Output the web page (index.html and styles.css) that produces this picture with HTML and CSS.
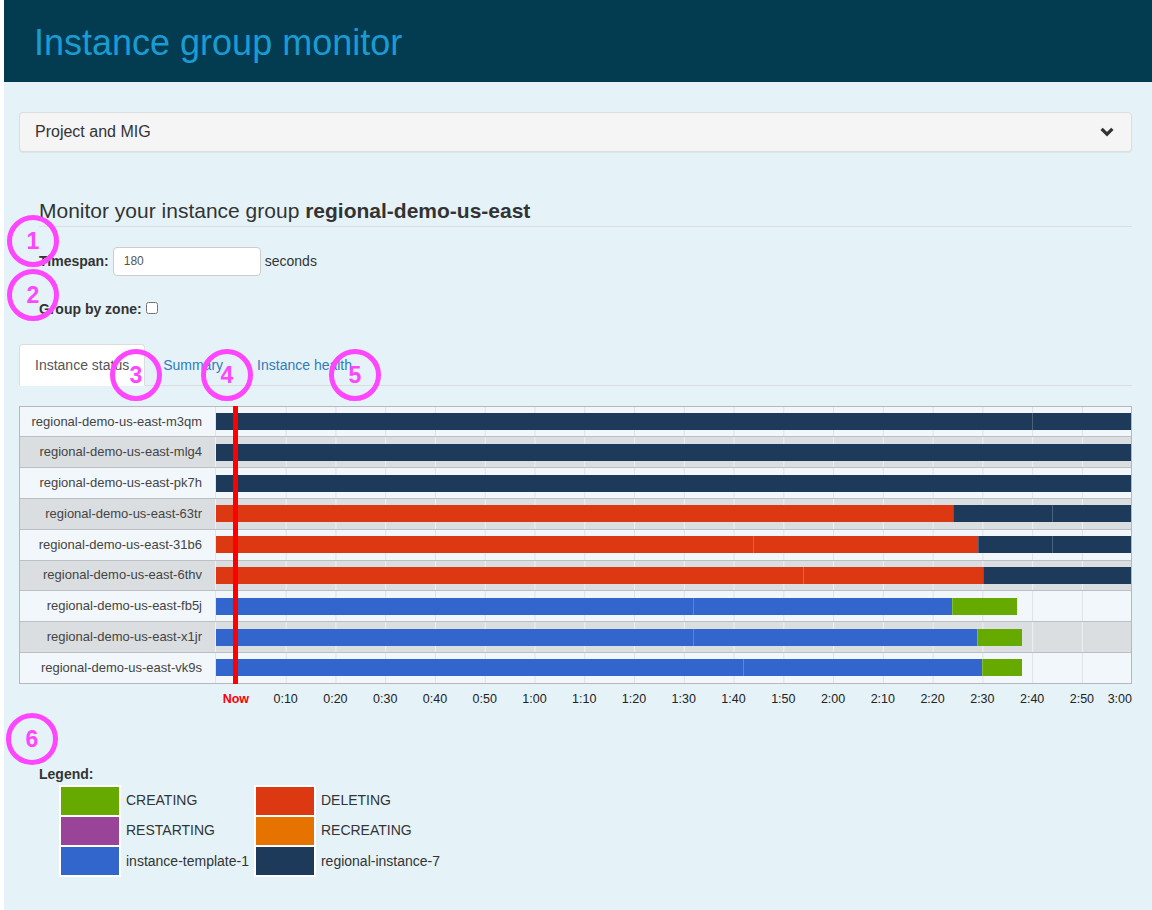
FILE: index.html
```html
<!DOCTYPE html>
<html lang="en">
<head>
<meta charset="utf-8">
<title>Instance group monitor</title>
<link rel="stylesheet" href="styles.css">
</head>
<body>
<div class="page">
  <header class="topbar"><h1>Instance group monitor</h1></header>
  <main class="container">
    <div class="panel">
      <div class="panel-heading">
        <span>Project and MIG</span>
        <svg class="chev" width="14" height="10" viewBox="0 0 14 10"><polyline points="1.6,1.8 7,7.2 12.4,1.8" fill="none" stroke="#333" stroke-width="3.2"/></svg>
      </div>
    </div>

    <section class="monitor">
      <h3 class="title">Monitor your instance group <b>regional-demo-us-east</b></h3>
      <div class="field">
        <label class="lbl">Timespan:</label>
        <input class="num" type="text" value="180">
        <span class="unit">seconds</span>
      </div>
      <div class="field2">
        <label class="lbl2">Group by zone:</label>
        <input class="chk" type="checkbox">
      </div>
    </section>

    <ul class="tabs">
      <li class="tab active">Instance status</li>
      <li class="tab">Summary</li>
      <li class="tab">Instance health</li>
    </ul>

    <div class="chart">
      <div class="row light">
        <div class="label">regional-demo-us-east-m3qm</div>
        <div class="track"><div class="bar"><span class="seg navy" style="width:816px"></span><span class="seg navy cont" style="width:99px"></span></div></div>
      </div>
      <div class="row gray">
        <div class="label">regional-demo-us-east-mlg4</div>
        <div class="track"><div class="bar"><span class="seg navy" style="width:915px"></span></div></div>
      </div>
      <div class="row light">
        <div class="label">regional-demo-us-east-pk7h</div>
        <div class="track"><div class="bar"><span class="seg navy" style="width:915px"></span></div></div>
      </div>
      <div class="row gray">
        <div class="label">regional-demo-us-east-63tr</div>
        <div class="track"><div class="bar"><span class="seg red" style="width:737px"></span><span class="seg navy cont" style="width:99px"></span><span class="seg navy cont" style="width:79px"></span></div></div>
      </div>
      <div class="row light">
        <div class="label">regional-demo-us-east-31b6</div>
        <div class="track"><div class="bar"><span class="seg red" style="width:537px"></span><span class="seg red cont" style="width:225px"></span><span class="seg navy cont" style="width:74px"></span><span class="seg navy cont" style="width:79px"></span></div></div>
      </div>
      <div class="row gray">
        <div class="label">regional-demo-us-east-6thv</div>
        <div class="track"><div class="bar"><span class="seg red" style="width:587px"></span><span class="seg red cont" style="width:180px"></span><span class="seg navy cont" style="width:148px"></span></div></div>
      </div>
      <div class="row light">
        <div class="label">regional-demo-us-east-fb5j</div>
        <div class="track"><div class="bar"><span class="seg blue" style="width:477px"></span><span class="seg blue cont" style="width:259px"></span><span class="seg green cont" style="width:65px"></span></div></div>
      </div>
      <div class="row gray">
        <div class="label">regional-demo-us-east-x1jr</div>
        <div class="track"><div class="bar"><span class="seg blue" style="width:477px"></span><span class="seg blue cont" style="width:284px"></span><span class="seg green cont" style="width:45px"></span></div></div>
      </div>
      <div class="row light">
        <div class="label">regional-demo-us-east-vk9s</div>
        <div class="track"><div class="bar"><span class="seg blue" style="width:527px"></span><span class="seg blue cont" style="width:239px"></span><span class="seg green cont" style="width:40px"></span></div></div>
      </div>
      <div class="nowline"></div>
    </div>

    <div class="axis">
      <span class="tick now">Now</span>
      <span class="tick">0:10</span>
      <span class="tick">0:20</span>
      <span class="tick">0:30</span>
      <span class="tick">0:40</span>
      <span class="tick">0:50</span>
      <span class="tick">1:00</span>
      <span class="tick">1:10</span>
      <span class="tick">1:20</span>
      <span class="tick">1:30</span>
      <span class="tick">1:40</span>
      <span class="tick">1:50</span>
      <span class="tick">2:00</span>
      <span class="tick">2:10</span>
      <span class="tick">2:20</span>
      <span class="tick">2:30</span>
      <span class="tick">2:40</span>
      <span class="tick">2:50</span>
      <span class="tick last">3:00</span>
    </div>

    <div class="legend">
      <div class="legend-title">Legend:</div>
      <table class="legend-table">
        <tr>
          <td class="sw"><div class="swatch c-creating"></div></td>
          <td class="name first">CREATING</td>
          <td class="sw"><div class="swatch c-deleting"></div></td>
          <td class="name">DELETING</td>
        </tr>
        <tr>
          <td class="sw"><div class="swatch c-restarting"></div></td>
          <td class="name first">RESTARTING</td>
          <td class="sw"><div class="swatch c-recreating"></div></td>
          <td class="name">RECREATING</td>
        </tr>
        <tr class="lastrow">
          <td class="sw"><div class="swatch c-template"></div></td>
          <td class="name first">instance-template-1</td>
          <td class="sw"><div class="swatch c-regional"></div></td>
          <td class="name">regional-instance-7</td>
        </tr>
      </table>
    </div>
  </main>

  <div class="mark m1">1</div>
  <div class="mark m2">2</div>
  <div class="mark m3">3</div>
  <div class="mark m4">4</div>
  <div class="mark m5">5</div>
  <div class="mark m6">6</div>
</div>
</body>
</html>
```

FILE: styles.css
```css
html, body {
  margin: 0;
  padding: 0;
  background: #ffffff;
}

body {
  font-family: "Liberation Sans", Arial, sans-serif;
  font-size: 14px;
  line-height: 20px;
  color: #333;
}

.page {
  position: relative;
  margin-left: 4px;
  min-height: 100vh;
  background: #e5f3f9;
}

.topbar {
  height: 82px;
  box-sizing: border-box;
  padding: 23px 0 0 30px;
  background: #033c50;
}

.topbar h1 {
  margin: 0;
  font-size: 36px;
  line-height: 39.6px;
  font-weight: normal;
  color: #1b9bd3;
}

.container {
  padding: 30px 20px 40px 15px;
}

.panel {
  background: #f5f5f5;
  border: 1px solid #dddddd;
  border-radius: 4px;
  box-shadow: 0 1px 1px rgba(0, 0, 0, 0.06);
}

.panel-heading {
  display: flex;
  justify-content: space-between;
  align-items: center;
  padding: 10px 17px 10px 15px;
  font-size: 16px;
  line-height: 17.6px;
  color: #333;
}

.chev {
  display: block;
}

.monitor {
  padding-left: 20px;
  margin-top: 47px;
}

.title {
  margin: 0;
  padding-bottom: 4px;
  border-bottom: 1px solid #d9dfe2;
  font-size: 21px;
  line-height: 23.1px;
  font-weight: normal;
  color: #333;
}

.title b {
  font-weight: bold;
}

.field {
  display: flex;
  align-items: center;
  gap: 4px;
  margin-top: 20px;
  height: 29px;
}

.lbl {
  font-weight: bold;
  font-size: 14px;
}

.num {
  width: 148px;
  height: 29px;
  box-sizing: border-box;
  margin: 0;
  padding: 0 10px;
  border: 1px solid #cccccc;
  border-radius: 4px;
  background: #fff;
  font-family: "Liberation Sans", Arial, sans-serif;
  font-size: 12px;
  color: #555;
}

.unit {
  font-size: 14px;
}

.field2 {
  display: flex;
  align-items: center;
  margin-top: 23px;
  height: 20px;
}

.lbl2 {
  font-weight: bold;
  font-size: 14px;
}

.chk {
  width: 12px;
  height: 12px;
  margin: 0 0 2px 4px;
}

.tabs {
  display: flex;
  list-style: none;
  margin: 25px 0 0;
  padding: 0;
  border-bottom: 1px solid #dddddd;
}

.tab {
  margin-right: 2px;
  margin-bottom: -1px;
  padding: 10px 15px;
  line-height: 20px;
  font-size: 14px;
  color: #337ab7;
  border: 1px solid transparent;
  border-radius: 4px 4px 0 0;
}

.tab.active {
  color: #555;
  background: #ffffff;
  border-color: #dddddd #dddddd transparent;
}

.chart {
  position: relative;
  margin-top: 20px;
  height: 278px;
  box-sizing: border-box;
  border: 1px solid #b5b9bd;
  display: flex;
  flex-direction: column;
}

.row {
  flex: 1;
  display: flex;
  min-height: 0;
  border-top: 1px solid #bcc0c4;
}

.row:first-child {
  border-top: 0;
}

.label {
  width: 196px;
  box-sizing: border-box;
  padding-right: 13px;
  display: flex;
  align-items: center;
  justify-content: flex-end;
  font-size: 13px;
  color: #444;
  white-space: nowrap;
}

.track {
  flex: 1;
  display: flex;
  align-items: center;
  background-size: 49.77px 100%;
  background-position: 19.9px 0;
  background-repeat: repeat-x;
}

.row.light .label {
  background: #f1f7fb;
  border-right: 1px solid #dfe4e8;
}

.row.light .track {
  background-color: #f1f7fb;
  background-image: linear-gradient(to right, #dde2e6 0, #dde2e6 1px, transparent 1px);
}

.row.gray .label {
  background: #dadee1;
  border-right: 1px solid #eef1f3;
}

.row.gray .track {
  background-color: #dadee1;
  background-image: linear-gradient(to right, #eef1f3 0, #eef1f3 1px, transparent 1px);
}

.bar {
  display: flex;
  height: 17px;
}

.seg {
  display: block;
  height: 100%;
  flex: none;
}

.seg.cont {
  box-shadow: inset 1px 0 0 rgba(255, 255, 255, 0.2);
}

.navy { background: #1e3a5b; }
.red { background: #dc3912; }
.blue { background: #3366cc; }
.green { background: #66aa00; }

.nowline {
  position: absolute;
  left: 213px;
  top: -1px;
  bottom: -1px;
  width: 5px;
  background: #ff0000;
}

.axis {
  display: flex;
  margin: 8px 0 0 192px;
  font-size: 12.5px;
  line-height: 15px;
  color: #222;
}

.tick {
  flex: none;
  width: 49.77px;
  text-align: center;
  white-space: nowrap;
}

.tick.now {
  color: #ff0000;
  font-weight: bold;
}

.tick.last {
  flex: 1;
  width: auto;
  text-align: right;
}

.legend {
  margin: 57px 0 0 20px;
}

.legend-title {
  font-weight: bold;
  font-size: 14px;
  line-height: 20px;
  margin-bottom: 1px;
}

.legend-table {
  margin-left: 20px;
  border-collapse: collapse;
  border-spacing: 0;
}

.legend-table td {
  padding: 0;
}

.legend-table td.sw {
  background: #ffffff;
  padding: 2px 2px 0;
}

.legend-table tr.lastrow td.sw {
  padding-bottom: 2px;
}

.legend-table td.name {
  padding: 0 6px 0 5px;
  font-size: 14px;
  color: #333;
  white-space: nowrap;
  vertical-align: middle;
}

.legend-table td.name.first {
  padding-right: 5px;
}

.swatch {
  width: 58px;
  height: 28px;
}

.c-creating { background: #66aa00; }
.c-deleting { background: #dc3912; }
.c-restarting { background: #994499; }
.c-recreating { background: #e67300; }
.c-template { background: #3366cc; }
.c-regional { background: #1e3a5b; }

.mark {
  position: absolute;
  width: 52px;
  height: 52px;
  box-sizing: border-box;
  border: 5px solid #ff46ff;
  border-radius: 50%;
  display: flex;
  align-items: center;
  justify-content: center;
  color: #ff46ff;
  font-weight: bold;
  font-size: 23px;
  line-height: 1;
}

.m1 { left: 3px; top: 215px; }
.m2 { left: 3px; top: 269px; }
.m3 { left: 106px; top: 349px; }
.m4 { left: 197px; top: 349px; }
.m5 { left: 325px; top: 349px; }
.m6 { left: 2px; top: 713px; }
```
